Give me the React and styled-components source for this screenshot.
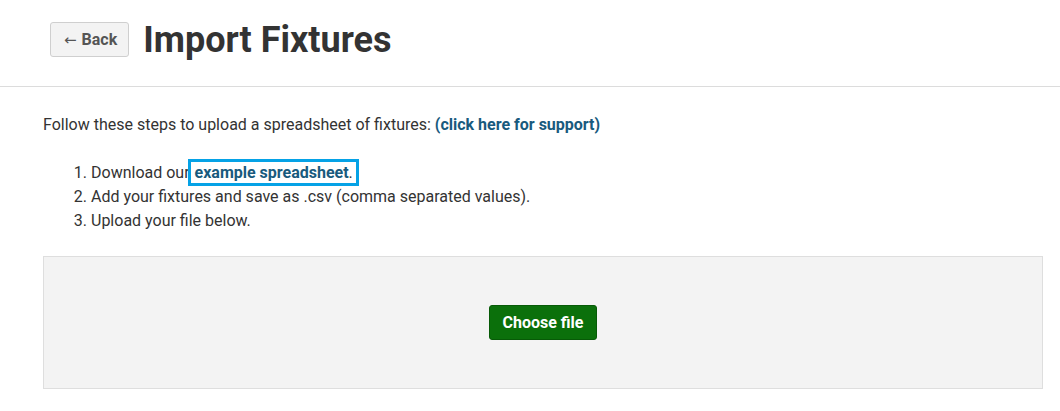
import React from "react";
import styled, { createGlobalStyle } from "styled-components";

const GlobalStyle = createGlobalStyle`
  body {
    margin: 0;
    padding: 0;
    background: #fff;
    font-family: Roboto, "Liberation Sans", sans-serif;
    color: #333;
  }
`;

const Header = styled.header`
  display: flex;
  align-items: center;
  gap: 14px;
  height: 87px;
  box-sizing: border-box;
  padding: 0 0 7px 50px;
  border-bottom: 1px solid #dcdcdc;
`;

const BackButton = styled.button`
  display: flex;
  align-items: center;
  gap: 5px;
  height: 35px;
  padding: 0 11px 0 13px;
  background: #f3f3f3;
  border: 1px solid #cfcfcf;
  border-radius: 3px;
  font-family: Roboto, "Liberation Sans", sans-serif;
  font-size: 16px;
  font-weight: 700;
  color: #555;
  cursor: pointer;
`;

const Arrow = styled.span`
  font-size: 15px;
  font-weight: 400;
  font-family: "DejaVu Sans", sans-serif;
`;

const Title = styled.h1`
  margin: 0;
  font-size: 36px;
  font-weight: 700;
  color: #333;
`;

const Content = styled.main`
  padding: 26px 17px 0 43px;
  font-size: 16px;
  line-height: 24px;
`;

const Intro = styled.p`
  margin: 0 0 24px;
`;

const Link = styled.a`
  color: #185a7d;
  font-weight: 700;
  text-decoration: none;
  padding: ${(p) => (p.$focused ? "0 2px 0 3px" : "0")};
  margin-left: ${(p) => (p.$focused ? "-2px" : "0")};
  outline: ${(p) => (p.$focused ? "3px solid #05a2e6" : "none")};
  outline-offset: 1px;
`;

const Plain = styled.span`
  font-weight: 400;
  color: #333;
`;

const Steps = styled.ol`
  margin: 0 0 23px;
  padding-left: 48px;
`;

const DropZone = styled.div`
  display: flex;
  align-items: center;
  justify-content: center;
  height: 133px;
  box-sizing: border-box;
  background: #f3f3f3;
  border: 1px solid #dedede;
`;

const ChooseButton = styled.button`
  height: 35px;
  padding: 0 13px;
  background: #0b700b;
  border: 1px solid #075a07;
  border-radius: 3px;
  color: #fff;
  font-family: Roboto, "Liberation Sans", sans-serif;
  font-size: 16px;
  font-weight: 700;
  cursor: pointer;
`;

export default function App() {
  return (
    <>
      <GlobalStyle />
      <Header>
        <BackButton>
          <Arrow>←</Arrow> Back
        </BackButton>
        <Title>Import Fixtures</Title>
      </Header>
      <Content>
        <Intro>
          Follow these steps to upload a spreadsheet of fixtures:{" "}
          <Link href="#">(click here for support)</Link>
        </Intro>
        <Steps>
          <li>
            Download our{" "}
            <Link href="#" $focused>
              example spreadsheet<Plain>.</Plain>
            </Link>
          </li>
          <li>Add your fixtures and save as .csv (comma separated values).</li>
          <li>Upload your file below.</li>
        </Steps>
        <DropZone>
          <ChooseButton>Choose file</ChooseButton>
        </DropZone>
      </Content>
    </>
  );
}
